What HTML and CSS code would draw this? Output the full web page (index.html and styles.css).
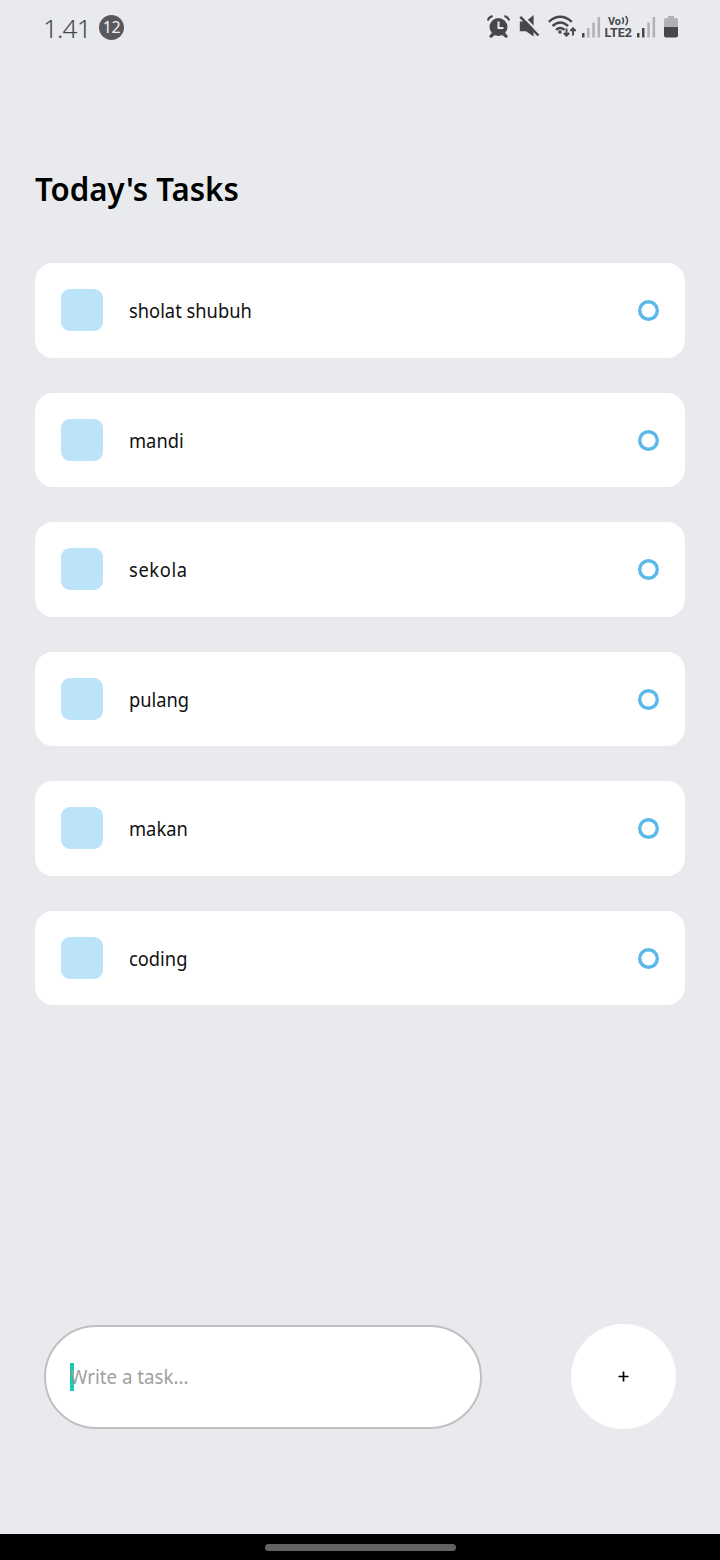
FILE: index.html
```html
<!DOCTYPE html>
<html lang="id">
<head>
<meta charset="utf-8">
<title>Today's Tasks</title>
<link rel="stylesheet" href="styles.css">
</head>
<body>
<div class="screen">
  <header class="status">
    <span class="clock">1.41</span>
    <span class="count">12</span>
    <svg class="status-icons" width="200" height="34" viewBox="484 10 200 34">
      <g fill="#46474a">
        <circle cx="498.500" cy="27" r="9"/>
        <path d="M491.500 33l-2.500 3.500 2 1.500 4-3zM505.500 33l2.500 3.500-2 1.500-4-3z"/>
        <path d="M519.800 21.500h6l7.800-6.500v21.500l-7.600-5.300h-6.200z"/>
      </g>
      <path d="M487.800 20.500q1-3.500 4.800-4.500M509.200 20.500q-1-3.500-4.800-4.500" fill="none" stroke="#46474a" stroke-width="2"/>
      <path d="M498.500 21.500v6.500h5" fill="none" stroke="#e8eaed" stroke-width="2"/>
      <path d="M521.500 14.800l19.500 20" stroke="#e8eaed" stroke-width="2.200"/>
      <path d="M520.300 16.800l18.200 18.700" stroke="#46474a" stroke-width="2.500"/>
      <g fill="none" stroke="#46474a" stroke-width="2.400">
        <path d="M548.800 21.800q11.500-10 23 0M552.500 26q7.800-7 15.600 0M556 29.800q4.300-3.800 8.600 0"/>
        <path d="M566.500 28.500v7M563.800 33l2.700 2.700 2.700-2.700M573 35.500v-7M570.300 31l2.700-2.700 2.700 2.700" stroke-width="1.900"/>
      </g>
      <circle cx="560" cy="32" r="1.800" fill="#46474a"/>
      <g fill="#b0b1b4">
        <path d="M587 28h2.500v9.500H587zM592.300 22.500h2.500v15h-2.500zM597.600 17h2.500v20.500h-2.500zM647.300 22.500h2.500v15h-2.500zM652.600 17h2.500v20.500h-2.500z"/>
        <path d="M664 27v-7q0-2 2-2h2v-2h6v2h2q2 0 2 2v7z"/>
      </g>
      <path d="M582 33h2.500v4.500H582zM637 33h2.500v4.500H637zM642 28h2.500v9.500H642zM664 27h14v8.500q0 2-2 2h-10q-2 0-2-2z" fill="#46474a"/>
      <text class="net" x="608" y="24.500" textLength="13" lengthAdjust="spacingAndGlyphs">Vo</text>
      <path d="M622.300 17.500q2.400 3.200 0 6.400M625.700 16q3.600 4.700 0 9.400" fill="none" stroke="#46474a" stroke-width="1.500"/>
      <text class="net lte" x="604.500" y="37.300" textLength="27.500" lengthAdjust="spacingAndGlyphs">LTE2</text>
    </svg>
  </header>
  <main class="content">
    <h1 class="title">Today's Tasks</h1>
    <ul class="tasks">
      <li class="task"><span class="square"></span><span class="label">sholat shubuh</span><svg class="ring" viewBox="0 0 21 21"><circle cx="10.500" cy="10.500" r="8.800"/></svg></li>
      <li class="task"><span class="square"></span><span class="label">mandi</span><svg class="ring" viewBox="0 0 21 21"><circle cx="10.500" cy="10.500" r="8.800"/></svg></li>
      <li class="task"><span class="square"></span><span class="label wide">sekola</span><svg class="ring" viewBox="0 0 21 21"><circle cx="10.500" cy="10.500" r="8.800"/></svg></li>
      <li class="task"><span class="square"></span><span class="label">pulang</span><svg class="ring" viewBox="0 0 21 21"><circle cx="10.500" cy="10.500" r="8.800"/></svg></li>
      <li class="task"><span class="square"></span><span class="label">makan</span><svg class="ring" viewBox="0 0 21 21"><circle cx="10.500" cy="10.500" r="8.800"/></svg></li>
      <li class="task"><span class="square"></span><span class="label">coding</span><svg class="ring" viewBox="0 0 21 21"><circle cx="10.500" cy="10.500" r="8.800"/></svg></li>
    </ul>
  </main>
  <div class="composer">
    <div class="field"><span class="caret"></span><span class="hint">Write a task...</span></div>
    <div class="add"><svg width="11" height="11" viewBox="0 0 11 11"><path d="M5.500 .5v10M.5 5.500h10" stroke="#000" stroke-width="1.700"/></svg></div>
  </div>
  <footer class="navbar"><span class="handle"></span></footer>
</div>
</body>
</html>
```
FILE: styles.css
```css
* { box-sizing: border-box; }
body { margin: 0; font-family: "Noto Sans", sans-serif; }
.screen {
  width: 720px;
  height: 1560px;
  display: flex;
  flex-direction: column;
  background: #e8eaed;
}
.status {
  height: 54px;
  padding: 0 36px 0 43px;
  display: flex;
  align-items: center;
  color: #46474a;
}
.clock { font-size: 26px; font-weight: 350; line-height: 54px; width: 56px; letter-spacing: -0.8px; padding-top: 1px; }
.count {
  width: 25px;
  height: 25px;
  border-radius: 50%;
  background: #58595b;
  color: #f2f3f5;
  font-size: 16px;
  line-height: 25px;
  text-align: center;
  letter-spacing: -0.5px;
}
.status-icons { margin-left: auto; }
.net { font: 700 11px Roboto, sans-serif; fill: #46474a; }
.lte { font-size: 12px; }
.content { flex: 1; padding: 111px 35px 0; }
.title {
  margin: 0;
  height: 48px;
  font-size: 33px;
  line-height: 48px;
  font-weight: 600;
  white-space: nowrap;
  transform: scaleX(0.945);
  transform-origin: 0 50%;
}
.tasks { list-style: none; margin: 50px 0 0; padding: 0; display: flex; flex-direction: column; gap: 35px; }
.task {
  height: 94.500px;
  padding: 0 26px;
  display: flex;
  align-items: center;
  border-radius: 18px;
  background: #fff;
}
.square { width: 42px; height: 42px; border-radius: 9px; background: #bbe3f9; }
.label {
  flex: 1;
  margin-left: 26px;
  padding-top: 2px;
  font-size: 20px;
  line-height: 28px;
  color: #111;
  transform: scaleX(0.915);
  transform-origin: 0 50%;
}
.wide { letter-spacing: 0.7px; }
.ring { width: 21px; height: 21px; margin-top: 1px; fill: none; stroke: #5bb8ea; stroke-width: 3.400; }
.composer {
  height: 106px;
  margin-bottom: 104px;
  padding: 0 44px;
  display: flex;
  align-items: center;
  justify-content: space-between;
}
.field {
  width: 438px;
  height: 104px;
  border: 2px solid #c0c0c3;
  border-radius: 52px;
  padding-left: 24px;
  display: flex;
  align-items: center;
  background: #fff;
}
.caret { width: 4px; height: 28px; background: #1bc9b4; }
.hint {
  margin-left: -4px;
  font-size: 20px;
  line-height: 28px;
  color: #a0a0a0;
  transform: scaleX(0.935);
  transform-origin: 0 50%;
}
.add {
  align-self: flex-start;
  width: 105px;
  height: 105px;
  border-radius: 50%;
  display: flex;
  align-items: center;
  justify-content: center;
  background: #fff;
}
.navbar { height: 26px; background: #000; display: flex; align-items: center; justify-content: center; }
.handle { width: 191px; height: 7px; border-radius: 4px; background: #626262; }
```
